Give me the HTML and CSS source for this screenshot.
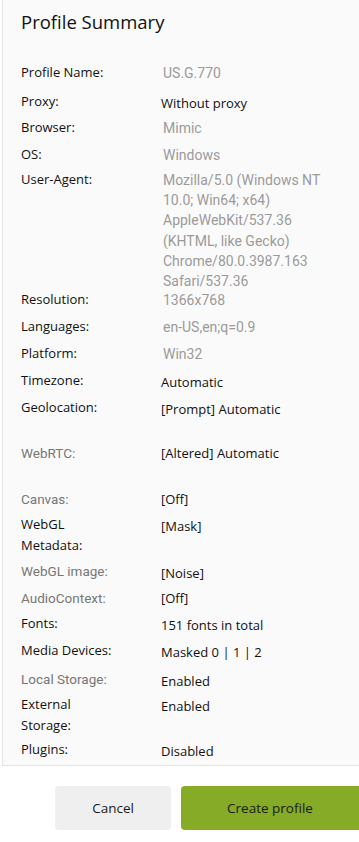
FILE: index.html
```html
<!DOCTYPE html>
<html lang="en">
<head>
    <meta charset="UTF-8">
    <meta name="viewport" content="width=device-width, initial-scale=1.0">
    <title>Profile Summary</title>
    <link rel="stylesheet" href="styles.css">
</head>
<body>
    <div class="summary-panel">
        <h2>Profile Summary</h2>
        <div class="summary-list">
            <div class="row r-name"><span class="label">Profile Name:</span><span class="value muted">US.G.770</span></div>
            <div class="row r-proxy"><span class="label">Proxy:</span><span class="value">Without proxy</span></div>
            <div class="row"><span class="label">Browser:</span><span class="value muted">Mimic</span></div>
            <div class="row r-os"><span class="label">OS:</span><span class="value muted">Windows</span></div>
            <div class="row r-ua"><span class="label">User-Agent:</span><span class="value muted multi">Mozilla/5.0 (Windows NT 10.0; Win64; x64) AppleWebKit/537.36 (KHTML, like Gecko) Chrome/80.0.3987.163 Safari/537.36</span></div>
            <div class="row"><span class="label">Resolution:</span><span class="value muted">1366x768</span></div>
            <div class="row"><span class="label">Languages:</span><span class="value muted">en-US,en;q=0.9</span></div>
            <div class="row"><span class="label">Platform:</span><span class="value muted">Win32</span></div>
            <div class="row"><span class="label">Timezone:</span><span class="value">Automatic</span></div>
            <div class="row r-geo"><span class="label">Geolocation:</span><span class="value">[Prompt] Automatic</span></div>
            <div class="row r-rtc"><span class="label dim">WebRTC:</span><span class="value">[Altered] Automatic</span></div>
            <div class="row"><span class="label dim">Canvas:</span><span class="value">[Off]</span></div>
            <div class="row two"><span class="label">WebGL<br>Metadata:</span><span class="value">[Mask]</span></div>
            <div class="row"><span class="label dim">WebGL image:</span><span class="value low">[Noise]</span></div>
            <div class="row"><span class="label dim">AudioContext:</span><span class="value">[Off]</span></div>
            <div class="row"><span class="label">Fonts:</span><span class="value">151 fonts in total</span></div>
            <div class="row"><span class="label">Media Devices:</span><span class="value">Masked 0 | 1 | 2</span></div>
            <div class="row"><span class="label dim">Local Storage:</span><span class="value low">Enabled</span></div>
            <div class="row two"><span class="label">External<br>Storage:</span><span class="value">Enabled</span></div>
            <div class="row"><span class="label">Plugins:</span><span class="value">Disabled</span></div>
        </div>
    </div>

    <div class="form-actions">
        <button type="button" class="btn-cancel">Cancel</button>
        <button type="submit" class="btn-create">Create profile</button>
    </div>
</body>
</html>
```

FILE: styles.css
```css
body {
    font-family: "Open Sans", Arial, sans-serif;
    background: #ffffff;
    margin: 0;
    padding: 0;
    color: #111111;
}

.summary-panel {
    margin-left: 2px;
    height: 766px;
    box-sizing: border-box;
    background: #fafafa;
    border-left: 1px solid #e4e4e4;
    border-bottom: 1px solid #e4e4e4;
    padding: 8px 0 0 18px;
    overflow: hidden;
}

h2 {
    margin: 0 0 26px 0;
    font-size: 18.5px;
    font-weight: 400;
    line-height: 28px;
    color: #111111;
}

.row {
    display: flex;
    height: 27px;
    font-size: 13px;
    line-height: 20px;
}

.row.r-name { height: 29px; }
.row.r-proxy { height: 26px; }
.row.r-os { height: 25px; }
.row.r-ua { height: 120px; }
.row.r-geo { height: 44px; }
.row.r-rtc { height: 46px; }
.row.two { height: 45px; }

.label {
    width: 140px;
    flex-shrink: 0;
    color: #111111;
    line-height: 21px;
}

.label.dim {
    font-family: Roboto, Arial, sans-serif;
    font-size: 13.5px;
    color: #777777;
    padding-top: 2px;
}

.value {
    color: #111111;
    padding-top: 2px;
}

.value.low {
    padding-top: 4px;
}

.value.muted {
    font-family: Roboto, Arial, sans-serif;
    font-size: 14px;
    line-height: 20.2px;
    color: #9a9a9a;
    padding-top: 1px;
    margin-left: 2px;
}

.value.multi {
    width: 170px;
}

.form-actions {
    display: flex;
    justify-content: flex-end;
    gap: 10px;
    padding-top: 20px;
}

button {
    font-family: "Open Sans", Arial, sans-serif;
    font-size: 13.5px;
    height: 44px;
    border: none;
    border-radius: 4px;
    color: #1a1a1a;
    cursor: pointer;
}

.btn-cancel {
    width: 116px;
    background-color: #efefef;
}

.btn-create {
    width: 178px;
    background-color: #85ab27;
    border-radius: 4px 0 0 4px;
}
```
